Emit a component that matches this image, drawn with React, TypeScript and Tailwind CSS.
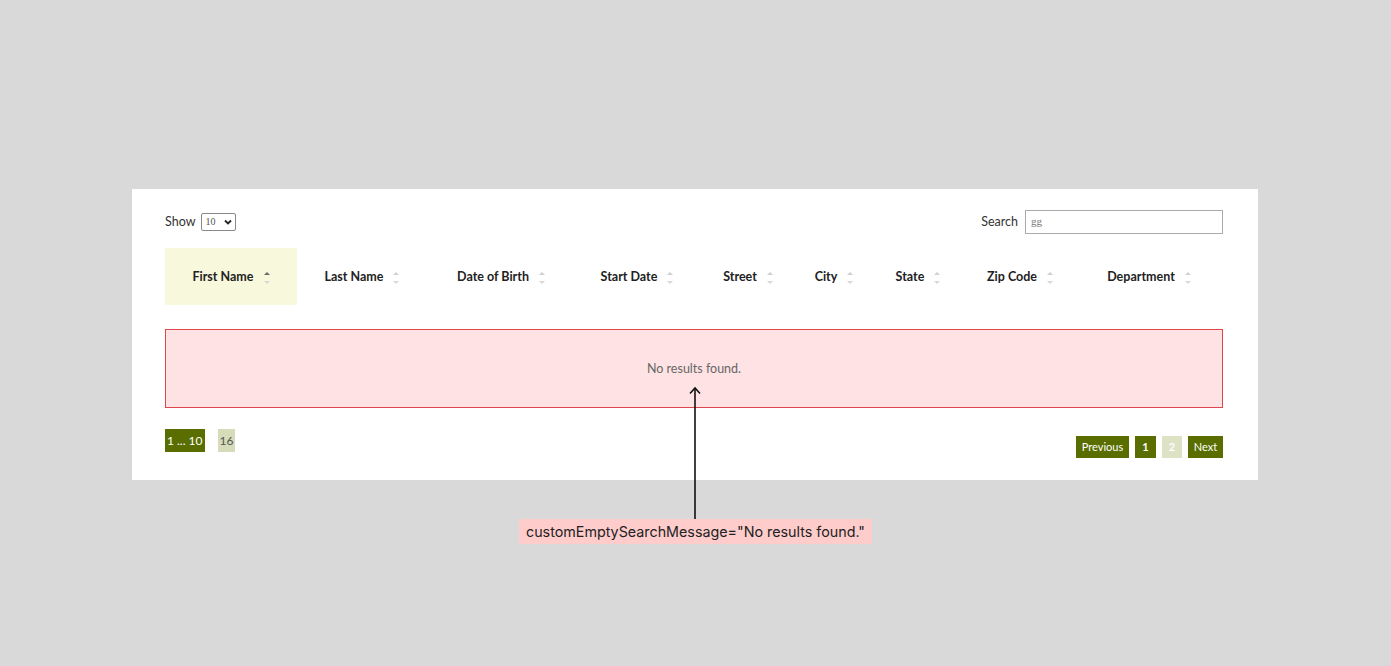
import React from "react";

const cols: { label: string; w: string; active?: boolean }[] = [
  { label: "First Name", w: "w-[132px]", active: true },
  { label: "Last Name", w: "w-[130px]" },
  { label: "Date of Birth", w: "w-[148px]" },
  { label: "Start Date", w: "w-[124px]" },
  { label: "Street", w: "w-[98px]" },
  { label: "City", w: "w-[74px]" },
  { label: "State", w: "w-[94px]" },
  { label: "Zip Code", w: "w-[110px]" },
  { label: "Department", w: "w-[148px]" },
];

function SortIcon({ active }: { active?: boolean }) {
  return (
    <svg width="6" height="14" viewBox="0 0 6 14" className="ml-[10px]">
      <polygon points="0,4 3,1 6,4" fill={active ? "#6b6b6b" : "#d0d0d0"} />
      <polygon points="0,10 3,13 6,10" fill="#d8d8d8" />
    </svg>
  );
}

export default function App() {
  return (
    <div
      className="relative w-[1391px] h-[666px] bg-[#d9d9d9] pt-[189px] pl-[132px]"
      style={{ fontFamily: "Lato, 'Noto Sans', sans-serif" }}
    >
      <div className="w-[1126px] h-[291px] bg-white pl-[33px] pr-[35px] pt-[20px]">
        <div className="flex items-center justify-between h-[25px]">
          <div className="flex items-center text-[12.5px] text-[#333]">
            <span className="pt-[2px]">Show</span>
            <div className="ml-[6px] w-[35px] h-[18px] border border-[#888] rounded-[2px] flex items-center justify-between px-[3px] text-[10px] text-[#555]">
              <span style={{ fontFamily: "'Liberation Serif', serif" }}>10</span>
              <svg width="8" height="6" viewBox="0 0 8 6">
                <path d="M1 1.5 L4 4.5 L7 1.5" stroke="#222" strokeWidth="1.8" fill="none" />
              </svg>
            </div>
          </div>
          <div className="flex items-center text-[12.5px] text-[#333]">
            <span className="pt-[2px]">Search</span>
            <div className="ml-[7px] w-[198px] h-[24px] border border-[#aaa] flex items-center px-[5px] text-[11px] text-[#777]" style={{ fontFamily: "'Liberation Serif', serif" }}>
              gg
            </div>
          </div>
        </div>

        <div className="flex mt-[14px] h-[57px]">
          {cols.map((c) => (
            <div
              key={c.label}
              className={`${c.w} flex items-center justify-center pt-[2px] text-[12.5px] font-bold text-[#222] ${c.active ? "bg-[#f8f8dc]" : ""}`}
            >
              <span>{c.label}</span>
              <SortIcon active={c.active} />
            </div>
          ))}
        </div>

        <div className="mt-[24px] h-[79px] border border-[#e0474c] bg-[#ffe3e4] flex items-center justify-center pt-[2px] text-[12.5px] text-[#666]">
          No results found.
        </div>

        <div className="flex justify-between mt-[21px]">
          <div className="flex gap-[13px] text-[12px]">
            <div className="h-[23px] px-[2px] bg-[#5a6e00] text-white flex items-center">1 ... 10</div>
            <div className="h-[23px] px-[2px] bg-[#d6dcb9] text-[#555] flex items-center">16</div>
          </div>
          <div className="flex gap-[6px] mt-[7px] text-[11px]">
            <div className="h-[22px] w-[53px] bg-[#5a6e00] text-white flex items-center justify-center">Previous</div>
            <div className="h-[22px] w-[21px] bg-[#5a6e00] text-white font-bold flex items-center justify-center">1</div>
            <div className="h-[22px] w-[20px] bg-[#dde2c4] text-white font-bold flex items-center justify-center">2</div>
            <div className="h-[22px] w-[35px] bg-[#5a6e00] text-white flex items-center justify-center">Next</div>
          </div>
        </div>
      </div>

      <svg className="absolute left-[688px] top-[386px]" width="14" height="134" viewBox="0 0 14 134">
        <path d="M7 2 L7 133" stroke="#111" strokeWidth="1.6" fill="none" />
        <path d="M2 7.5 L7 2 L12 7.5" stroke="#111" strokeWidth="1.6" fill="none" />
      </svg>

      <div
        className="absolute left-[519px] top-[519px] h-[25px] w-[353px] bg-[#ffcccc] flex items-center justify-center whitespace-nowrap text-[14.3px] text-[#222]"
        style={{ fontFamily: "Inter, sans-serif" }}
      >
        customEmptySearchMessage="No results found."
      </div>
    </div>
  );
}
